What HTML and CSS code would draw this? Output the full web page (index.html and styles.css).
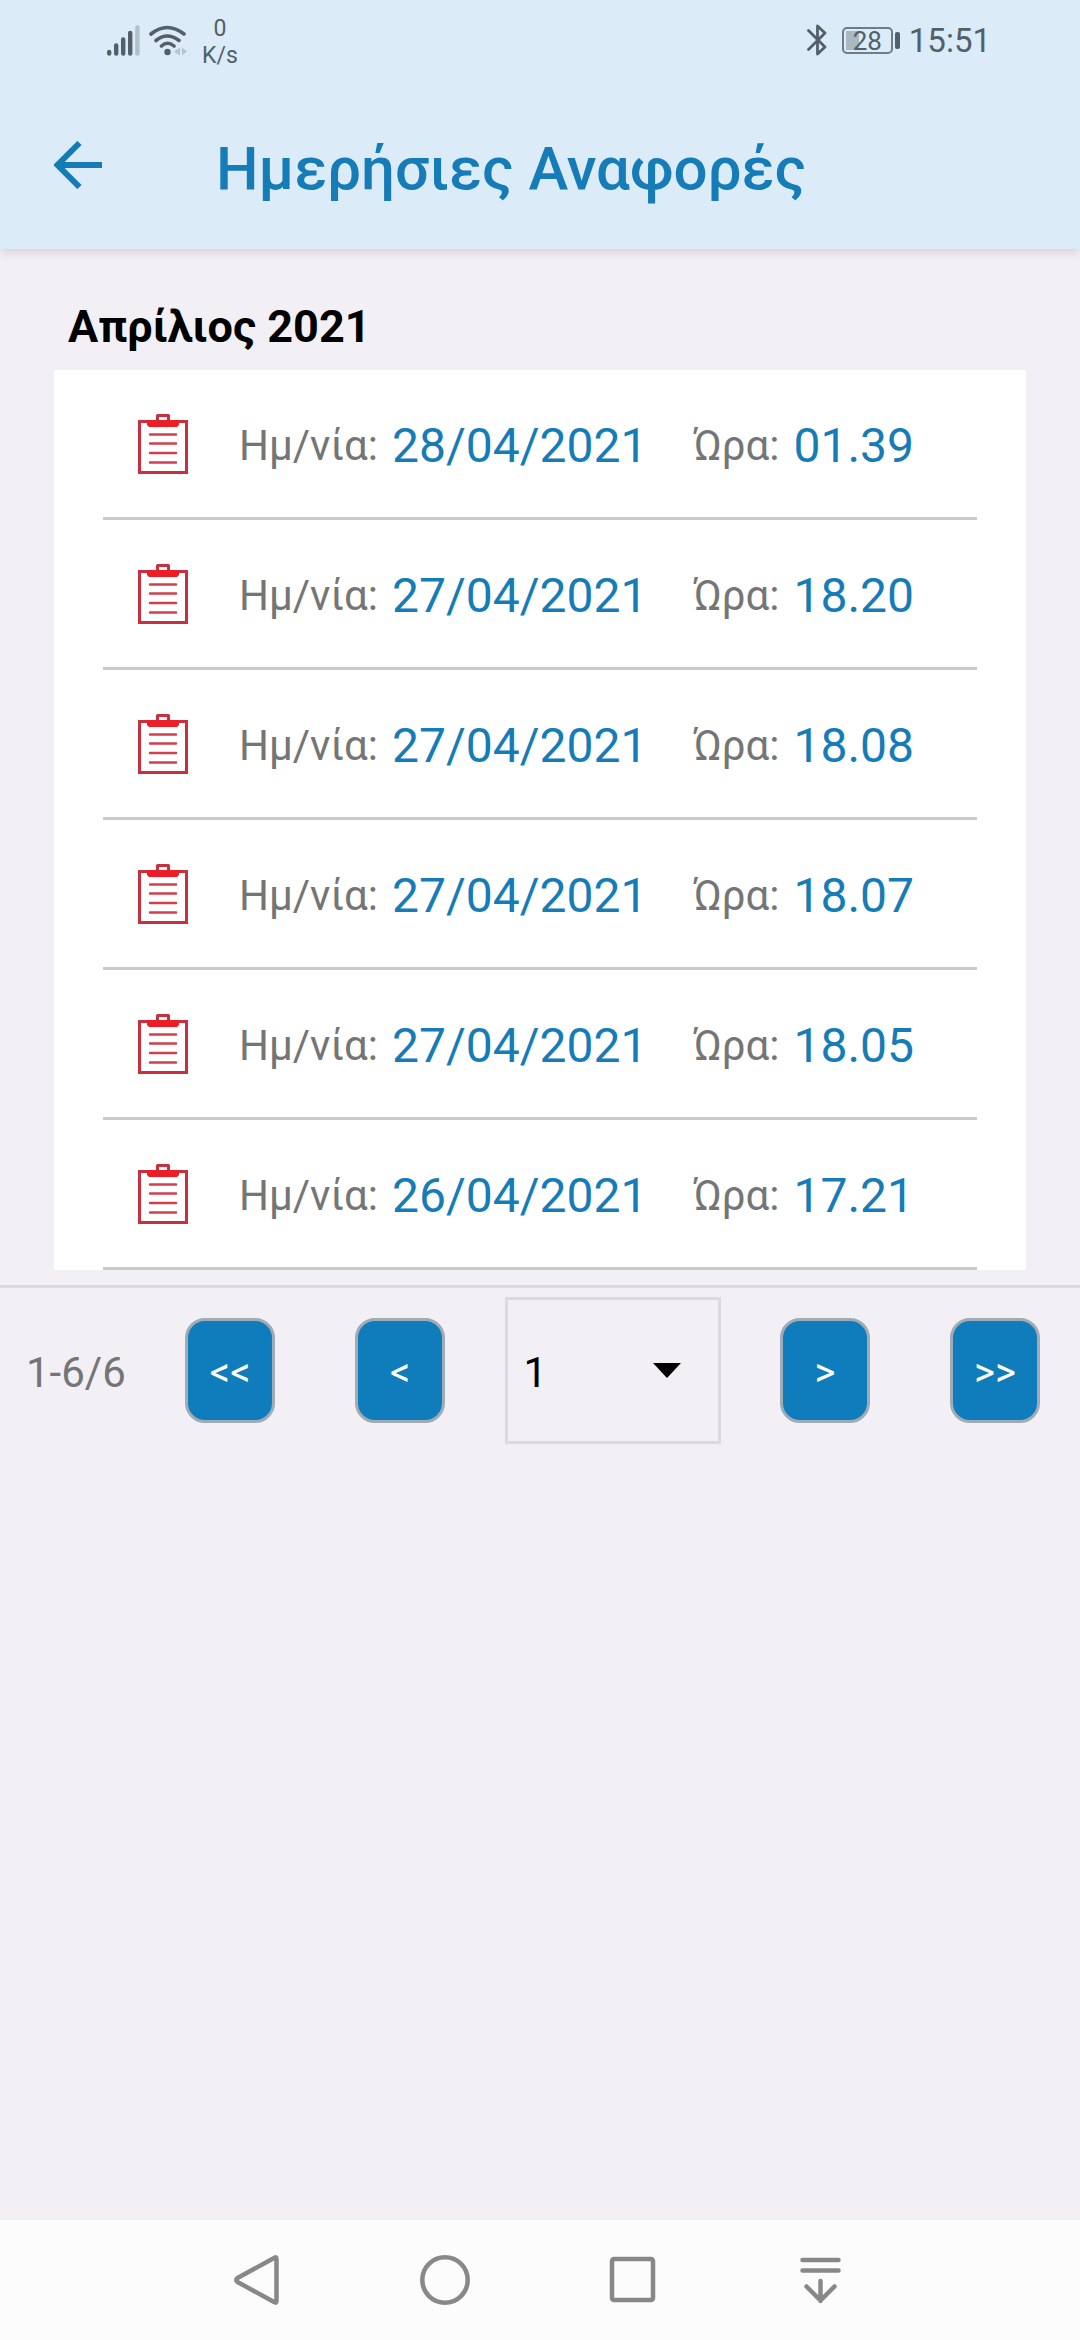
FILE: index.html
```html
<!DOCTYPE html>
<html lang="el">
<head>
<meta charset="utf-8">
<meta name="viewport" content="width=device-width, initial-scale=1">
<title>Ημερήσιες Αναφορές</title>
<link rel="stylesheet" href="styles.css">
</head>
<body>
<svg class="defs" aria-hidden="true">
  <symbol id="clipboard" viewBox="0 0 50 60">
    <rect x="1.5" y="7.5" width="47" height="51" fill="none" stroke="#c8303f" stroke-width="3"/>
    <path d="M9 6h32v5l-2 2H11l-2-2z" fill="#ee1c25"/>
    <path d="M19.500 7V1.500h11V7" fill="none" stroke="#c8303f" stroke-width="3" stroke-linejoin="round"/>
    <path d="M12 20.500h26M12 29.500h26M12 39h26M12 48.500h26" stroke="#cf3f4c" stroke-width="2.400" stroke-linecap="round"/>
  </symbol>
</svg>

<header class="top">
  <div class="status">
    <div class="status-group">
      <svg class="signal" viewBox="0 0 33 31" aria-hidden="true">
        <g stroke-width="4.400" stroke-linecap="round" stroke="#53606a">
          <path d="M2.200 27v1.500M9.200 20.500v8M16.200 14.500v14M23.200 8v20.500"/>
          <path stroke="#b1c0cb" d="M30.400 2.500v26"/>
        </g>
      </svg>
      <svg class="wifi" viewBox="0 0 38 31" aria-hidden="true">
        <g fill="none" stroke="#53606a" stroke-width="3.600" stroke-linecap="round">
          <path d="M2 9Q18 -4 35 9M7 15.500Q18 6.500 30 15.500M12.500 21Q18.500 15.500 25 21"/>
        </g>
        <circle cx="18.500" cy="27" r="3.200" fill="#53606a"/>
        <path d="M31 22.500v8l-6-4zM33 22.500v8l5-4z" fill="#b7c4ce"/>
      </svg>
      <div class="speed"><span>0</span><span>K/s</span></div>
    </div>
    <div class="status-group">
      <svg class="bluetooth" viewBox="0 0 20 32" aria-hidden="true">
        <path d="M1.500 6.500 18 23 10.500 30V2L18 9 1.500 25.500" fill="none" stroke="#53606a" stroke-width="2.800" stroke-linecap="round" stroke-linejoin="round"/>
      </svg>
      <div class="battery">28</div>
      <div class="clock">15:51</div>
    </div>
  </div>
  <div class="appbar">
    <button class="back" type="button" aria-label="Πίσω">
      <svg viewBox="0 0 48 48" aria-hidden="true">
        <path d="M25.500 2 3.500 24l22 22M3.500 24H48" fill="none" stroke="#157cb8" stroke-width="6"/>
      </svg>
    </button>
    <h1 class="title">Ημερήσιες Αναφορές</h1>
  </div>
</header>

<main class="content">
  <h2 class="month">Απρίλιος 2021</h2>
  <ul class="reports">
    <li class="report"><svg class="report-icon" aria-hidden="true"><use href="#clipboard"/></svg><div class="field"><span class="label">Ημ/νία:</span><span class="value">28/04/2021</span></div><div class="field"><span class="label">Ώρα:</span><span class="value">01.39</span></div></li>
    <li class="report"><svg class="report-icon" aria-hidden="true"><use href="#clipboard"/></svg><div class="field"><span class="label">Ημ/νία:</span><span class="value">27/04/2021</span></div><div class="field"><span class="label">Ώρα:</span><span class="value">18.20</span></div></li>
    <li class="report"><svg class="report-icon" aria-hidden="true"><use href="#clipboard"/></svg><div class="field"><span class="label">Ημ/νία:</span><span class="value">27/04/2021</span></div><div class="field"><span class="label">Ώρα:</span><span class="value">18.08</span></div></li>
    <li class="report"><svg class="report-icon" aria-hidden="true"><use href="#clipboard"/></svg><div class="field"><span class="label">Ημ/νία:</span><span class="value">27/04/2021</span></div><div class="field"><span class="label">Ώρα:</span><span class="value">18.07</span></div></li>
    <li class="report"><svg class="report-icon" aria-hidden="true"><use href="#clipboard"/></svg><div class="field"><span class="label">Ημ/νία:</span><span class="value">27/04/2021</span></div><div class="field"><span class="label">Ώρα:</span><span class="value">18.05</span></div></li>
    <li class="report"><svg class="report-icon" aria-hidden="true"><use href="#clipboard"/></svg><div class="field"><span class="label">Ημ/νία:</span><span class="value">26/04/2021</span></div><div class="field"><span class="label">Ώρα:</span><span class="value">17.21</span></div></li>
  </ul>
  <nav class="pager" aria-label="Σελίδες">
    <span class="count">1-6/6</span>
    <div class="steps">
      <button class="step" type="button">&lt;&lt;</button>
      <button class="step" type="button">&lt;</button>
    </div>
    <div class="page-picker">
      <select class="page-select" aria-label="Σελίδα"><option>1</option></select>
      <svg class="caret" viewBox="0 0 28 15" aria-hidden="true"><path d="M0 0h28L14 15z"/></svg>
    </div>
    <div class="steps">
      <button class="step" type="button">&gt;</button>
      <button class="step" type="button">&gt;&gt;</button>
    </div>
  </nav>
</main>

<footer class="system-nav">
  <button class="key" type="button" aria-label="Πίσω"><svg viewBox="0 0 50 50"><path d="M42.500 2.800Q44.500 1.500 44.500 4v42q0 2.500-2 1.200L5.500 27Q3 25 5.500 23z"/></svg></button>
  <button class="key" type="button" aria-label="Αρχική"><svg viewBox="0 0 50 50"><circle cx="25" cy="25" r="22.700"/></svg></button>
  <button class="key" type="button" aria-label="Πρόσφατα"><svg viewBox="0 0 50 50"><rect x="4" y="4" width="41" height="41" rx="2"/></svg></button>
  <button class="key" type="button" aria-label="Ειδοποιήσεις"><svg viewBox="0 0 50 50"><path d="M6.500 5h36M6.500 15.500h36M24.500 26v20M10.500 31.500l14 14 14-14"/></svg></button>
</footer>
</body>
</html>
```

FILE: styles.css
```css
* {
  box-sizing: border-box;
}

body {
  margin: 0;
  min-height: 100vh;
  display: flex;
  flex-direction: column;
  background: #f2f0f5;
  color: #757575;
  font-family: Roboto, "Noto Sans", sans-serif;
}

h1, h2, ul {
  margin: 0;
  padding: 0;
}

button, select {
  font-family: inherit;
}

svg {
  display: block;
  flex: none;
}

.defs {
  position: absolute;
  width: 0;
  height: 0;
}

/* Status bar and title */
.top {
  background: #dbebf7;
  box-shadow: 0 2px 10px rgba(90, 40, 60, 0.2);
}

.status {
  height: 80px;
  padding: 0 89px 0 107px;
  display: flex;
  justify-content: space-between;
  align-items: center;
  color: #53606a;
}

.status-group {
  display: flex;
  align-items: center;
}

.signal {
  width: 33px;
  height: 31px;
}

.wifi {
  width: 38px;
  height: 31px;
  margin: 0 15px 0 9px;
}

.speed {
  display: flex;
  flex-direction: column;
  align-items: center;
  padding-top: 4px;
  font-size: 23px;
  line-height: 27px;
}

.bluetooth {
  width: 20px;
  height: 32px;
}

.battery {
  position: relative;
  width: 51px;
  height: 27px;
  margin: 0 16px 0 15px;
  border: 2px solid #6e7d88;
  border-radius: 5px;
  background: linear-gradient(#aab8c2, #aab8c2) 2px 2px / 13px 19px no-repeat;
  font-size: 26px;
  line-height: 24px;
  text-align: center;
}

.battery::after {
  content: "";
  position: absolute;
  right: -9px;
  top: 3px;
  width: 5px;
  height: 17px;
  border-radius: 2px;
  background: #53606a;
}

.clock {
  font-size: 33px;
  line-height: 40px;
  padding-top: 2px;
}

.appbar {
  min-height: 169px;
  padding: 0 54px;
  display: flex;
  align-items: center;
  gap: 114px;
}

.back {
  width: 48px;
  height: 48px;
  padding: 0;
  border: 0;
  background: none;
}

.title {
  padding-top: 8px;
  color: #157cb8;
  font-size: 60px;
  font-weight: 500;
  line-height: 72px;
}

/* Report list */
.content {
  flex: 1;
}

.month {
  padding: 52px 68px 17px;
  color: #000;
  font-size: 45px;
  font-weight: 700;
  line-height: 52px;
}

.reports {
  margin: 0 54px;
  padding: 0 49px;
  background: #fff;
  list-style: none;
}

.report {
  min-height: 150px;
  padding-left: 35px;
  display: flex;
  align-items: center;
  gap: 46px;
  border-bottom: 3px solid #cacaca;
}

.report-icon {
  width: 50px;
  height: 60px;
  margin-right: 5px;
}

.field {
  display: flex;
  align-items: center;
  gap: 14px;
  padding-top: 4px;
}

.label {
  font-size: 42px;
  line-height: 56px;
}

.value {
  color: #157cb8;
  font-size: 48px;
  line-height: 56px;
}

/* Pager */
.pager {
  margin-top: 15px;
  padding: 9px 40px 9px 26px;
  display: flex;
  align-items: center;
  justify-content: space-between;
  border-top: 3px solid #dcdadd;
}

.count {
  padding-top: 4px;
  font-size: 42px;
  line-height: 56px;
}

.steps {
  display: flex;
  gap: 80px;
}

.step {
  width: 90px;
  height: 105px;
  padding: 4px 0 0;
  border: 3px solid #9fabb5;
  border-radius: 20px;
  background: #0f7dbb;
  color: #fff;
  font-size: 40px;
  font-weight: 400;
}

.page-picker {
  position: relative;
  width: 216px;
}

.page-select {
  display: block;
  width: 100%;
  height: 147px;
  padding: 4px 16px 0;
  border: 3px solid #dcdadd;
  border-radius: 0;
  background: transparent;
  color: #000;
  font-size: 42px;
  appearance: none;
}

.caret {
  position: absolute;
  right: 40px;
  top: 66px;
  width: 28px;
  height: 15px;
  pointer-events: none;
}

/* System navigation */
.system-nav {
  height: 120px;
  padding-right: 2px;
  display: flex;
  align-items: center;
  justify-content: center;
  gap: 138px;
  background: #fcfcfc;
}

.key {
  width: 50px;
  height: 50px;
  padding: 0;
  border: 0;
  background: none;
}

.key svg {
  fill: none;
  stroke: #888;
  stroke-width: 4.5;
  stroke-linecap: round;
  stroke-linejoin: round;
}
```
